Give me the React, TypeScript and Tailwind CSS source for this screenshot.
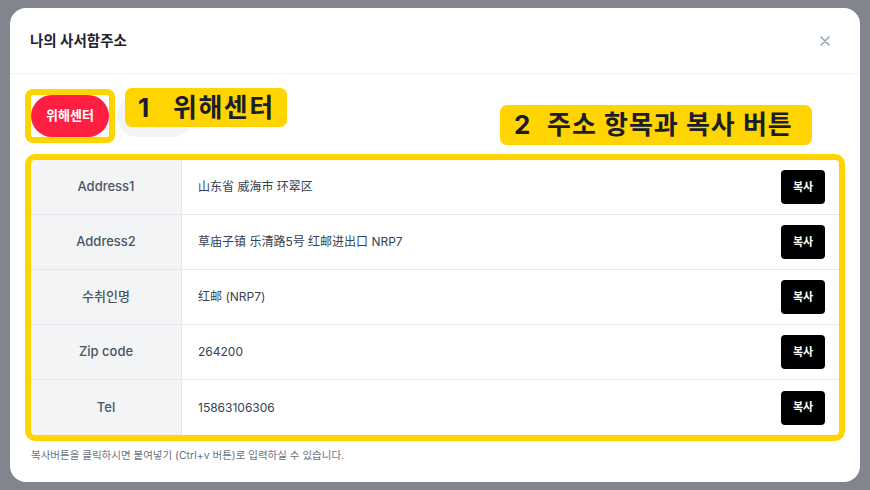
import React from "react";

const rows = [
  { label: "Address1", value: "山东省 威海市 环翠区" },
  { label: "Address2", value: "草庙子镇 乐清路5号 红邮进出口 NRP7" },
  { label: "수취인명", value: "红邮 (NRP7)" },
  { label: "Zip code", value: "264200" },
  { label: "Tel", value: "15863106306" },
];

export default function App() {
  return (
    <div className="h-[490px] w-[870px] overflow-hidden bg-[#82858e] pt-[8px] pl-[10px] font-['Inter','Noto_Sans_CJK_KR',sans-serif]">
      <div className="flex h-[474px] w-[850px] flex-col rounded-[16px] bg-white">
        {/* header */}
        <div className="flex h-[66px] shrink-0 items-center justify-between border-b border-[#f0f1f3] pl-[20px] pr-[30px]">
          <h2 className="text-[14.5px] font-bold text-[#1f2330]">나의 사서함주소</h2>
          <button aria-label="close" className="flex h-[10px] w-[10px] items-center justify-center">
            <svg width="10" height="10" viewBox="0 0 10 10" fill="none">
              <path d="M1 1L9 9M9 1L1 9" stroke="#94a3b8" strokeWidth="1.6" strokeLinecap="round" />
            </svg>
          </button>
        </div>

        <div className="flex flex-1 flex-col px-[21px] pt-[21px]">
          {/* tabs */}
          <div className="relative flex h-[42px] items-center gap-[8px]">
            <div className="relative">
              <button className="flex h-[42px] w-[78px] items-center justify-center rounded-full bg-[#ff1f43] text-[13px] font-bold text-white">
                위해센터
              </button>
              <div className="pointer-events-none absolute -inset-[6px] rounded-[8px] border-[6px] border-[#ffd400]" />
            </div>
            <div className="h-[42px] w-[76px] rounded-full bg-[#f3f4f6]" />

            {/* annotation labels */}
            <div className="absolute left-[94px] top-[-7px] flex h-[39px] w-[162px] items-center rounded-[7px] bg-[#ffd400] pl-[13px] text-[26px] font-bold leading-none text-[#1b1d2a]">
              <span className="w-[35px]">1</span>
              <span className="tracking-[1.5px]">위해센터</span>
            </div>
            <div className="absolute left-[469px] top-[10px] flex h-[40px] w-[312px] items-center rounded-[7px] bg-[#ffd400] pl-[14px] text-[26px] font-bold leading-none text-[#1b1d2a]">
              <span className="w-[33px]">2</span>
              <span className="tracking-[1px]">주소 항목과 복사 버튼</span>
            </div>
          </div>

          {/* table */}
          <div className="relative mt-[23px]">
            <div className="flex flex-col">
              {rows.map((r, i) => (
                <div
                  key={r.label}
                  className={`flex h-[55px] ${i < rows.length - 1 ? "border-b border-[#e5e7eb]" : ""}`}
                >
                  <div className="flex w-[151px] shrink-0 items-center justify-center border-r border-[#e5e7eb] bg-[#f3f4f6] text-[13px] font-medium text-[#4b5563]">
                    {r.label}
                  </div>
                  <div className="flex flex-1 items-center justify-between pl-[16px] pr-[14px]">
                    <span className="text-[12px] text-[#374151]">{r.value}</span>
                    <button className="flex h-[34px] w-[44px] items-center justify-center rounded-[4px] bg-black text-[11px] font-bold text-white">
                      복사
                    </button>
                  </div>
                </div>
              ))}
            </div>
            <div className="pointer-events-none absolute -inset-[6px] rounded-[10px] border-[6px] border-[#ffd400]" />
          </div>

          <p className="mt-[13px] text-[10.5px] leading-[16px] text-[#6b7280]">
            복사버튼을 클릭하시면 붙여넣기 (Ctrl+v 버튼)로 입력하실 수 있습니다.
          </p>
        </div>
      </div>
    </div>
  );
}
